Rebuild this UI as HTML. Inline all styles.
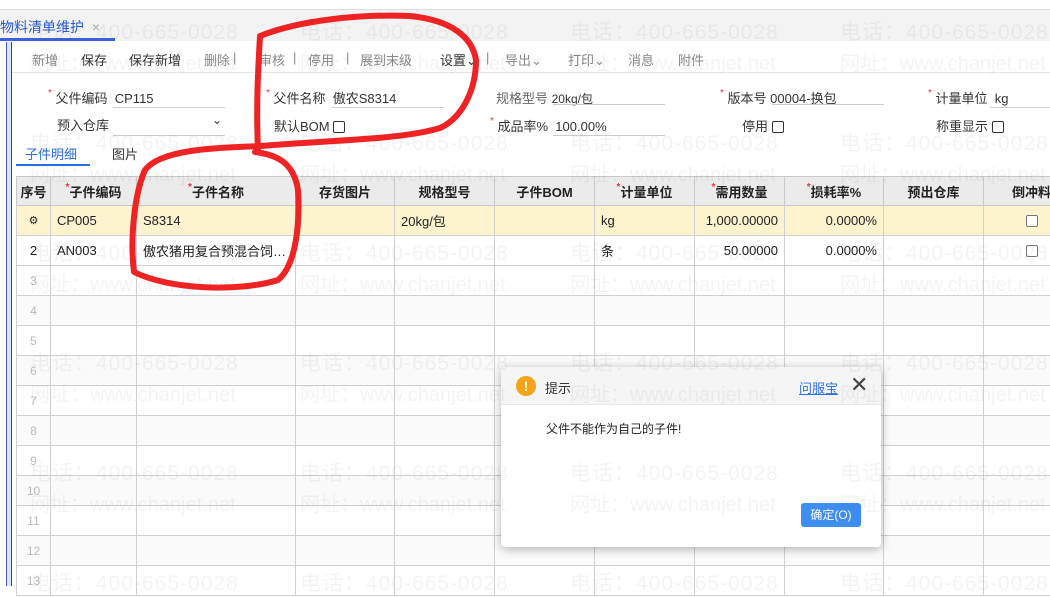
<!DOCTYPE html>
<html><head><meta charset="utf-8"><style>
*{margin:0;padding:0;box-sizing:border-box}
body{width:1050px;height:586px;overflow:hidden;background:#fff;font-family:"Liberation Sans","Noto Sans CJK SC",sans-serif;font-size:13px;color:#333;position:relative}
.a{position:absolute;white-space:nowrap}
.wm{position:absolute;color:#000;opacity:.045;font-size:21px;white-space:nowrap;letter-spacing:1px;z-index:50;pointer-events:none}
.wu{letter-spacing:0;font-size:20px}
.t{position:absolute;top:50px;font-size:13px;color:#888;white-space:nowrap}
.d{color:#333}
.req{color:#e33;font-size:10px;vertical-align:top}
.ul{position:absolute;height:1px;background:#ccc}
.cb{display:inline-block;width:12px;height:12px;border:1px solid #333;border-radius:2px;vertical-align:-2px;background:#fff}
table{position:absolute;left:16px;top:176px;border-collapse:collapse;table-layout:fixed;width:1047px}
td{border:1px solid #d0d0d0;height:30px;padding:0 6px;font-size:13px;color:#222;white-space:nowrap;overflow:hidden}
th{border:1px solid #c8c8c8;height:29px;background:#ebebeb;font-weight:bold;font-size:13px;color:#222;white-space:nowrap;overflow:hidden}
tr.y td{background:#fdf3cf}
tr.g td{background:#fafafa}
.n{text-align:center;color:#bbb;font-size:12px}
</style></head><body>
<div class="a" style="left:0;top:9px;width:1050px;height:1px;background:#ddd"></div>
<div class="a" style="left:0;top:10px;width:1050px;height:31px;background:#f3f3f3"></div>
<div class="a" style="left:0;top:17px;font-size:14px;color:#2a5ad6">物料清单维护 <span style="color:#aaa;margin-left:4px">×</span></div>
<div class="a" style="left:0;top:38px;width:115px;height:3px;background:#3a64d8"></div>
<div class="a" style="left:6px;top:42px;width:6px;height:544px;background:#dfe8fa;border-left:1px solid #3a64d8;border-right:1px solid #2b3f8a"></div>
<div class="a" style="left:12px;top:72px;width:1038px;height:1px;background:#e4e4e4"></div>
<div class="t" style="left:32px">新增</div>
<div class="t d" style="left:81px">保存</div>
<div class="t d" style="left:129px">保存新增</div>
<div class="t" style="left:204px">删除</div>
<div class="t" style="left:233px">|</div>
<div class="t" style="left:259px">审核</div>
<div class="t" style="left:293px">|</div>
<div class="t" style="left:308px">停用</div>
<div class="t" style="left:346px">|</div>
<div class="t" style="left:360px">展到末级</div>
<div class="t d" style="left:440px">设置⌄</div>
<div class="t" style="left:486px">|</div>
<div class="t" style="left:505px">导出⌄</div>
<div class="t" style="left:568px">打印⌄</div>
<div class="t" style="left:628px">消息</div>
<div class="t" style="left:678px">附件</div>
<div class="a" style="left:48px;top:88px"><span class="req">*</span> 父件编码&nbsp; CP115</div>
<div class="ul" style="left:113px;top:107px;width:112px"></div>
<div class="a" style="left:57px;top:115px">预入仓库</div>
<div class="a" style="left:212px;top:113px;font-size:12px">⌄</div>
<div class="ul" style="left:113px;top:135px;width:112px"></div>
<div class="a" style="left:266px;top:88px"><span class="req">*</span> 父件名称&nbsp; 傲农S8314</div>
<div class="ul" style="left:332px;top:107px;width:112px"></div>
<div class="a" style="left:274px;top:116px">默认BOM <span class="cb"></span></div>
<div class="a" style="left:496px;top:88px;color:#666">规格型号 <span style="font-size:12px;color:#333">20kg/包</span></div>
<div class="ul" style="left:553px;top:104px;width:112px"></div>
<div class="a" style="left:490px;top:116px"><span class="req">*</span> 成品率%&nbsp; 100.00%</div>
<div class="ul" style="left:553px;top:135px;width:112px"></div>
<div class="a" style="left:720px;top:88px"><span class="req">*</span> 版本号 00004-换包</div>
<div class="ul" style="left:772px;top:104px;width:112px"></div>
<div class="a" style="left:742px;top:116px">停用 <span class="cb"></span></div>
<div class="a" style="left:928px;top:88px"><span class="req">*</span> 计量单位&nbsp; kg</div>
<div class="ul" style="left:990px;top:107px;width:60px"></div>
<div class="a" style="left:936px;top:116px">称重显示 <span class="cb"></span></div>
<div class="a" style="left:25px;top:144px;color:#2a6fe0;font-size:13px">子件明细</div>
<div class="a" style="left:16px;top:164px;width:74px;height:2px;background:#2a6fe0"></div>
<div class="a" style="left:112px;top:144px">图片</div>
<table>
<colgroup><col style="width:34px"><col style="width:86px"><col style="width:159px"><col style="width:99px"><col style="width:100px"><col style="width:100px"><col style="width:100px"><col style="width:90px"><col style="width:99px"><col style="width:100px"><col style="width:80px"></colgroup>
<tr><th>序号</th><th><span class="req">*</span>子件编码</th><th><span class="req">*</span>子件名称</th><th>存货图片</th><th>规格型号</th><th>子件BOM</th><th><span class="req">*</span>计量单位</th><th><span class="req">*</span>需用数量</th><th><span class="req">*</span>损耗率%</th><th>预出仓库</th><th style="text-align:left;padding-left:28px">倒冲料</th></tr>
<tr class="y"><td style="text-align:center;font-size:11px">⚙</td><td>CP005</td><td>S8314</td><td></td><td>20kg/包</td><td></td><td>kg</td><td style="text-align:right">1,000.00000</td><td style="text-align:right">0.0000%</td><td></td><td style="padding-left:42px"><span class="cb" style="border-color:#777"></span></td></tr>
<tr><td style="text-align:center">2</td><td>AN003</td><td>傲农猪用复合预混合饲…</td><td></td><td></td><td></td><td>条</td><td style="text-align:right">50.00000</td><td style="text-align:right">0.0000%</td><td></td><td style="padding-left:42px"><span class="cb" style="border-color:#777"></span></td></tr>
<tr><td class="n">3</td><td></td><td></td><td></td><td></td><td></td><td></td><td></td><td></td><td></td><td></td></tr>
<tr class="g"><td class="n">4</td><td></td><td></td><td></td><td></td><td></td><td></td><td></td><td></td><td></td><td></td></tr>
<tr><td class="n">5</td><td></td><td></td><td></td><td></td><td></td><td></td><td></td><td></td><td></td><td></td></tr>
<tr class="g"><td class="n">6</td><td></td><td></td><td></td><td></td><td></td><td></td><td></td><td></td><td></td><td></td></tr>
<tr><td class="n">7</td><td></td><td></td><td></td><td></td><td></td><td></td><td></td><td></td><td></td><td></td></tr>
<tr class="g"><td class="n">8</td><td></td><td></td><td></td><td></td><td></td><td></td><td></td><td></td><td></td><td></td></tr>
<tr><td class="n">9</td><td></td><td></td><td></td><td></td><td></td><td></td><td></td><td></td><td></td><td></td></tr>
<tr class="g"><td class="n">10</td><td></td><td></td><td></td><td></td><td></td><td></td><td></td><td></td><td></td><td></td></tr>
<tr><td class="n">11</td><td></td><td></td><td></td><td></td><td></td><td></td><td></td><td></td><td></td><td></td></tr>
<tr class="g"><td class="n">12</td><td></td><td></td><td></td><td></td><td></td><td></td><td></td><td></td><td></td><td></td></tr>
<tr><td class="n">13</td><td></td><td></td><td></td><td></td><td></td><td></td><td></td><td></td><td></td><td></td></tr>
</table>
<div class="a" style="left:501px;top:367px;width:380px;height:180px;background:#fff;border-radius:4px;box-shadow:0 2px 10px rgba(0,0,0,.3);overflow:hidden;z-index:10">
<div style="position:absolute;left:0;top:0;width:380px;height:38px;background:#f5f5f5;border-bottom:1px solid #e8e8e8"></div>
<div style="position:absolute;left:15px;top:9px;width:20px;height:20px;border-radius:50%;background:#f5a31a;color:#fff;font-weight:bold;text-align:center;line-height:20px;font-size:14px">!</div>
<div style="position:absolute;left:44px;top:11px;font-size:13px;color:#333">提示</div>
<div style="position:absolute;left:298px;top:11px;font-size:13px;color:#2a6fe0;text-decoration:underline">问服宝</div>
<div style="position:absolute;left:349px;top:5px;font-size:22px;color:#444">✕</div>
<div style="position:absolute;left:45px;top:53px;font-size:12px;color:#222">父件不能作为自己的子件!</div>
<div style="position:absolute;left:300px;top:136px;width:60px;height:24px;background:#3d8ef0;border-radius:3px;color:#fff;font-size:12px;text-align:center;line-height:24px">确定(O)</div>
</div>
<div class="wm" style="left:30px;top:16px">电话：400-665-0028</div><div class="wm" style="left:300px;top:16px">电话：400-665-0028</div><div class="wm" style="left:570px;top:16px">电话：400-665-0028</div><div class="wm" style="left:840px;top:16px">电话：400-665-0028</div>
<div class="wm wu" style="left:30px;top:47px">网址：www.chanjet.net</div><div class="wm wu" style="left:300px;top:47px">网址：www.chanjet.net</div><div class="wm wu" style="left:570px;top:47px">网址：www.chanjet.net</div><div class="wm wu" style="left:840px;top:47px">网址：www.chanjet.net</div>
<div class="wm" style="left:30px;top:127px">电话：400-665-0028</div><div class="wm" style="left:300px;top:127px">电话：400-665-0028</div><div class="wm" style="left:570px;top:127px">电话：400-665-0028</div><div class="wm" style="left:840px;top:127px">电话：400-665-0028</div>
<div class="wm wu" style="left:30px;top:158px">网址：www.chanjet.net</div><div class="wm wu" style="left:300px;top:158px">网址：www.chanjet.net</div><div class="wm wu" style="left:570px;top:158px">网址：www.chanjet.net</div><div class="wm wu" style="left:840px;top:158px">网址：www.chanjet.net</div>
<div class="wm" style="left:30px;top:237px">电话：400-665-0028</div><div class="wm" style="left:300px;top:237px">电话：400-665-0028</div><div class="wm" style="left:570px;top:237px">电话：400-665-0028</div><div class="wm" style="left:840px;top:237px">电话：400-665-0028</div>
<div class="wm wu" style="left:30px;top:268px">网址：www.chanjet.net</div><div class="wm wu" style="left:300px;top:268px">网址：www.chanjet.net</div><div class="wm wu" style="left:570px;top:268px">网址：www.chanjet.net</div><div class="wm wu" style="left:840px;top:268px">网址：www.chanjet.net</div>
<div class="wm" style="left:30px;top:347px">电话：400-665-0028</div><div class="wm" style="left:300px;top:347px">电话：400-665-0028</div><div class="wm" style="left:570px;top:347px">电话：400-665-0028</div><div class="wm" style="left:840px;top:347px">电话：400-665-0028</div>
<div class="wm wu" style="left:30px;top:378px">网址：www.chanjet.net</div><div class="wm wu" style="left:300px;top:378px">网址：www.chanjet.net</div><div class="wm wu" style="left:570px;top:378px">网址：www.chanjet.net</div><div class="wm wu" style="left:840px;top:378px">网址：www.chanjet.net</div>
<div class="wm" style="left:30px;top:457px">电话：400-665-0028</div><div class="wm" style="left:300px;top:457px">电话：400-665-0028</div><div class="wm" style="left:570px;top:457px">电话：400-665-0028</div><div class="wm" style="left:840px;top:457px">电话：400-665-0028</div>
<div class="wm wu" style="left:30px;top:488px">网址：www.chanjet.net</div><div class="wm wu" style="left:300px;top:488px">网址：www.chanjet.net</div><div class="wm wu" style="left:570px;top:488px">网址：www.chanjet.net</div><div class="wm wu" style="left:840px;top:488px">网址：www.chanjet.net</div>
<div class="wm" style="left:30px;top:567px">电话：400-665-0028</div><div class="wm" style="left:300px;top:567px">电话：400-665-0028</div><div class="wm" style="left:570px;top:567px">电话：400-665-0028</div><div class="wm" style="left:840px;top:567px">电话：400-665-0028</div>
<svg class="a" style="left:0;top:0;z-index:60" width="1050" height="586">
<path d="M258 150 C256 110 258 70 260 36 C300 20 360 14 410 16 C450 20 472 36 476 60 C476 90 462 118 440 128 C400 140 330 140 260 146 C210 148 160 150 145 170 C134 195 130 240 134 272 C170 290 240 292 278 280 C296 265 300 225 298 190 C294 165 280 155 255 152" fill="none" stroke="#ef2323" stroke-width="6" stroke-linecap="round" stroke-linejoin="round"/>
</svg>
</body></html>
